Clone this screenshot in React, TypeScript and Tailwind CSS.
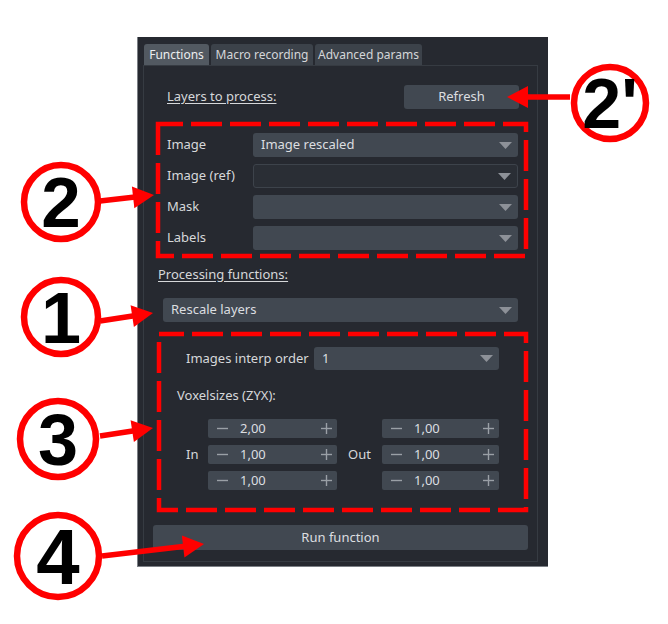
import React from "react";

const uiFont = { fontFamily: '"Noto Sans", "Open Sans", sans-serif' };

const Caret = () => (
   <svg width="13" height="7" viewBox="0 0 13 7">
      <polygon points="0,0 13,0 6.5,7" fill="#8d9198" />
   </svg>
);

const Combo = ({ value, className, dim }: { value?: string; className: string; dim?: boolean }) => (
   <div
      className={`${className} flex items-center justify-between rounded-[3px] pl-[8px] pr-[6px] text-[13px] text-[#dcdee0] ${
         dim ? "bg-[#2a2e35] border border-[#3d434b]" : "bg-[#414851]"
      }`}
   >
      <span>{value}</span>
      <Caret />
   </div>
);

const SpinBox = ({ value, className }: { value: string; className: string }) => (
   <div className={`${className} h-[19px] flex items-center rounded-[2px] bg-[#414851] text-[13px] text-[#dcdee0]`}>
      <svg width="11" height="11" viewBox="0 0 11 11" className="ml-[9px]">
         <line x1="0" y1="5.5" x2="11" y2="5.5" stroke="#9aa0a6" strokeWidth="1.4" />
      </svg>
      <span className="ml-[12px]">{value}</span>
      <svg width="11" height="11" viewBox="0 0 11 11" className="ml-auto mr-[5px]">
         <line x1="0" y1="5.5" x2="11" y2="5.5" stroke="#9aa0a6" strokeWidth="1.4" />
         <line x1="5.5" y1="0" x2="5.5" y2="11" stroke="#9aa0a6" strokeWidth="1.4" />
      </svg>
   </div>
);

// red annotation arrow, from (x1,y1) to the tip (x2,y2)
const Arrow = ({ x1, y1, x2, y2 }: { x1: number; y1: number; x2: number; y2: number }) => {
   const len = Math.hypot(x2 - x1, y2 - y1);
   const ux = (x2 - x1) / len;
   const uy = (y2 - y1) / len;
   const bx = x2 - ux * 21;
   const by = y2 - uy * 21;
   const pts = `${x2},${y2} ${bx - uy * 11},${by + ux * 11} ${bx + uy * 11},${by - ux * 11}`;
   return (
      <g>
         <line x1={x1} y1={y1} x2={bx + ux * 2} y2={by + uy * 2} stroke="#ff0000" strokeWidth="5.5" />
         <polygon points={pts} fill="#ff0000" />
      </g>
   );
};

const Badge = ({ cx, cy, r, label, size }: { cx: number; cy: number; r: number; label: string; size: number }) => (
   <g>
      <circle cx={cx} cy={cy} r={r} fill="#ffffff" stroke="#ff0000" strokeWidth="6.5" />
      <text
         x={cx}
         y={cy + size * 0.358}
         textAnchor="middle"
         fontSize={size}
         fontWeight="700"
         fontFamily='"Liberation Sans", Arial, sans-serif'
         fill="#000000"
      >
         {label}
      </text>
   </g>
);

const Annotations = () => (
   <svg className="absolute inset-0 pointer-events-none" width="668" height="624" viewBox="0 0 668 624">
      <rect x="158" y="124" width="368" height="132" fill="none" stroke="#ff0000" strokeWidth="4.5" strokeDasharray="31 8" strokeDashoffset="6" />
      <rect x="159" y="334" width="367" height="176" fill="none" stroke="#ff0000" strokeWidth="4.5" strokeDasharray="31 8" strokeDashoffset="6" />

      <Arrow x1={570} y1={97} x2={507} y2={97} />
      <Arrow x1={100} y1={201} x2={154} y2={195} />
      <Arrow x1={100} y1={321} x2={153} y2={313} />
      <Arrow x1={100} y1={436} x2={153} y2={428} />
      <Arrow x1={102} y1={556} x2={204} y2={544} />

      <Badge cx={610} cy={103} r={36} label="2'" size={70} />
      <Badge cx={61} cy={202} r={37} label="2" size={71} />
      <Badge cx={61} cy={317} r={37} label="1" size={72} />
      <Badge cx={58} cy={439} r={38} label="3" size={72} />
      <Badge cx={58} cy={556} r={41} label="4" size={78} />
   </svg>
);

export default function App() {
   return (
      <div className="relative w-[668px] h-[624px] bg-white overflow-hidden pt-[37px] pl-[137px]" style={uiFont}>
         {/* Panel */}
         <div className="w-[411px] h-[530px] bg-[#262930] border-l border-b border-[#7c8086] pl-[5px] pt-[7px] pr-[10px] pb-[4px] flex flex-col">
            {/* Tabs */}
            <div className="flex gap-[2px] ml-[1px] h-[21px] text-[12px]">
               <div className="w-[65px] flex items-center justify-center rounded-t-[3px] bg-[#525961] text-[#eceef0]">Functions</div>
               <div className="w-[102px] flex items-center justify-center rounded-t-[3px] bg-[#3c424a] text-[#d4d6d9]">Macro recording</div>
               <div className="w-[107px] flex items-center justify-center rounded-t-[3px] bg-[#3c424a] text-[#d4d6d9]">Advanced params</div>
            </div>

            {/* Tab pane */}
            <div className="flex-1 border border-[#363b42] flex flex-col text-[#d6d8da] text-[13px]">
               {/* Layers to process */}
               <div className="mt-[19px] h-[24px] flex items-center justify-between pl-[23px] pr-[18px]">
                  <span className="underline underline-offset-2">Layers to process:</span>
                  <div className="w-[115px] h-[24px] rounded-[3px] bg-[#414851] flex items-center justify-center text-[#dcdee0]">Refresh</div>
               </div>

               <div className="mt-[24px] flex flex-col gap-[7px] pl-[23px]">
                  {[
                     { label: "Image", value: "Image rescaled" },
                     { label: "Image (ref)", value: "", dim: true },
                     { label: "Mask", value: "" },
                     { label: "Labels", value: "" },
                  ].map((row) => (
                     <div key={row.label} className="h-[24px] flex items-center">
                        <span className="w-[86px]">{row.label}</span>
                        <Combo value={row.value} dim={row.dim} className="w-[265px] h-[24px]" />
                     </div>
                  ))}
               </div>

               {/* Processing functions */}
               <div className="mt-[16px] h-[16px] leading-[16px] pl-[14px]">
                  <span className="underline underline-offset-2">Processing functions:</span>
               </div>
               <Combo value="Rescale layers" className="mt-[16px] ml-[19px] w-[355px] h-[24px]" />

               <div className="mt-[25px] h-[23px] flex items-center pl-[42px]">
                  <span className="w-[128px]">Images interp order</span>
                  <Combo value="1" className="w-[185px] h-[23px]" />
               </div>

               <div className="mt-[17px] h-[16px] leading-[16px] pl-[33px]">Voxelsizes (ZYX):</div>

               <div className="mt-[16px] flex items-center pl-[42px]">
                  <span className="w-[22px]">In</span>
                  <div className="flex flex-col gap-[7px]">
                     <SpinBox value="2,00" className="w-[129px]" />
                     <SpinBox value="1,00" className="w-[129px]" />
                     <SpinBox value="1,00" className="w-[129px]" />
                  </div>
                  <span className="w-[45px] pl-[11px]">Out</span>
                  <div className="flex flex-col gap-[7px]">
                     <SpinBox value="1,00" className="w-[117px]" />
                     <SpinBox value="1,00" className="w-[117px]" />
                     <SpinBox value="1,00" className="w-[117px]" />
                  </div>
               </div>

               <div className="mt-[35px] ml-[9px] w-[375px] h-[25px] rounded-[3px] bg-[#414851] flex items-center justify-center text-[#dcdee0]">
                  Run function
               </div>
            </div>
         </div>

         <Annotations />
      </div>
   );
}
